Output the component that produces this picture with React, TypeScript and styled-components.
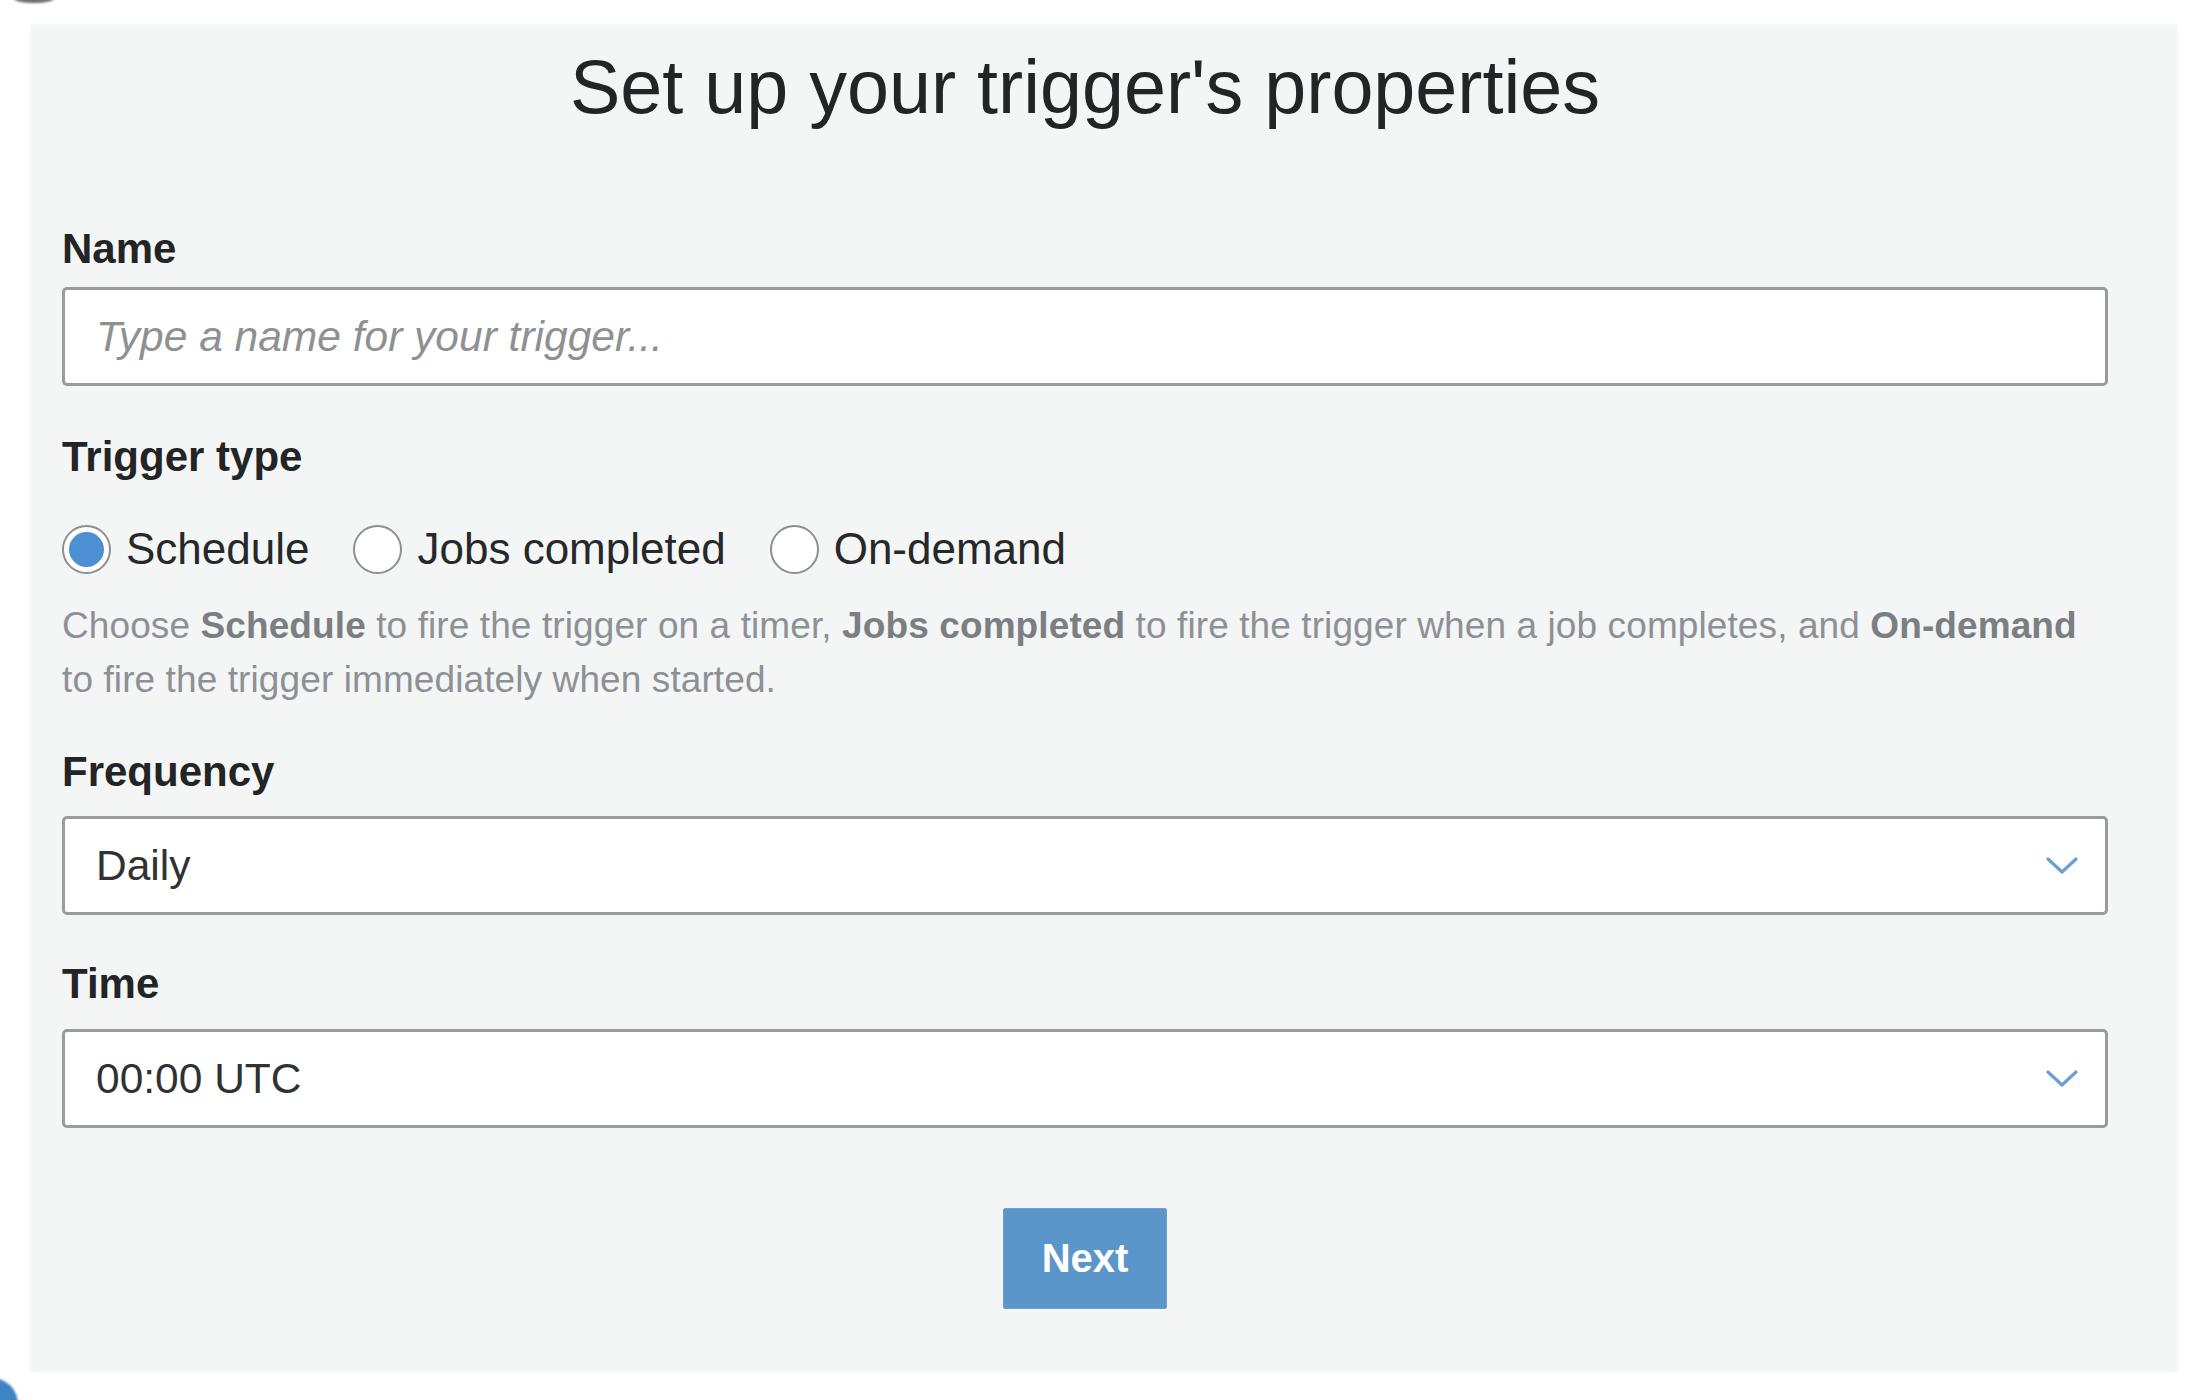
import React from "react";
import styled, { createGlobalStyle } from "styled-components";

const GlobalStyle = createGlobalStyle`
  html, body {
    margin: 0;
    padding: 0;
    background: #ffffff;
  }
  body {
    font-family: "Liberation Sans", Arial, Helvetica, sans-serif;
    color: #222;
  }
  * { box-sizing: border-box; }
`;

const Page = styled.div`
  position: relative;
  width: 2204px;
  height: 1400px;
  background: #ffffff;
  padding: 25px 27px 0 31px;
  overflow: hidden;
`;

const Corner = styled.span<{ $pos: "top" | "bottom" }>`
  position: absolute;
  left: ${(p) => (p.$pos === "top" ? "14px" : "-34px")};
  top: ${(p) => (p.$pos === "top" ? "-6px" : "1378px")};
  width: ${(p) => (p.$pos === "top" ? "40px" : "52px")};
  height: ${(p) => (p.$pos === "top" ? "9px" : "52px")};
  border-radius: 50%;
  background: ${(p) => (p.$pos === "top" ? "#6b6e72" : "#3f84c2")};
  filter: blur(1px);
`;

const Panel = styled.div`
  width: 2146px;
  height: 1346px;
  background: #f4f5f5;
  box-shadow: 0 0 3px 1px rgba(244, 245, 245, 0.8);
  padding: 15px 69px 0 31px;
  display: flex;
  flex-direction: column;
`;

const Title = styled.h1`
  margin: 0;
  font-size: 75.5px;
  line-height: 94px;
  font-weight: 400;
  color: #222426;
  text-align: center;
`;

const Field = styled.div<{ $top: number }>`
  display: flex;
  flex-direction: column;
  margin-top: ${(p) => p.$top}px;
`;

const Label = styled.label<{ $gap: number }>`
  font-size: 42px;
  line-height: 46px;
  font-weight: 700;
  color: #222426;
  margin-bottom: ${(p) => p.$gap}px;
`;

const TextBox = styled.div`
  height: 99px;
  background: #ffffff;
  border: 3px solid #999b9c;
  border-radius: 5px;
  display: flex;
  align-items: center;
  justify-content: space-between;
  padding: 0 27px 0 31px;
`;

const Placeholder = styled.span`
  font-size: 42.5px;
  font-style: italic;
  color: #8e9092;
`;

const Value = styled.span`
  font-size: 42.5px;
  color: #2f3133;
`;

const Chevron = styled.svg`
  width: 32px;
  height: 20px;
  flex: none;
`;

const RadioRow = styled.div`
  display: flex;
  align-items: center;
  gap: 44px;
  height: 50px;
  margin-top: 44px;
`;

const Option = styled.div`
  display: flex;
  align-items: center;
  gap: 15px;
`;

const RadioCircle = styled.span<{ $checked?: boolean }>`
  width: 49px;
  height: 49px;
  border-radius: 50%;
  border: 2.5px solid #8d8f91;
  background: #ffffff;
  display: flex;
  align-items: center;
  justify-content: center;
  flex: none;

  &::after {
    content: "";
    width: 35px;
    height: 35px;
    border-radius: 50%;
    background: ${(p) => (p.$checked ? "#4d8fd3" : "transparent")};
  }
`;

const OptionText = styled.span`
  font-size: 44px;
  line-height: 50px;
  color: #26282a;
`;

const Help = styled.p`
  margin: 25px 0 0 0;
  font-size: 37px;
  line-height: 54px;
  color: #8d9195;
  letter-spacing: 0.1px;

  b {
    font-weight: 700;
    color: #7b7f83;
  }
`;

const ButtonRow = styled.div`
  display: flex;
  justify-content: center;
  margin-top: 80px;
`;

const NextButton = styled.button`
  width: 164px;
  height: 101px;
  background: #5b96ca;
  border: 1px solid #6aa2d3;
  border-radius: 2px;
  color: #ffffff;
  font-family: "Liberation Sans", Arial, sans-serif;
  font-size: 40px;
  font-weight: 700;
  cursor: pointer;
  padding: 0;
`;

const ChevronIcon = () => (
  <Chevron viewBox="0 0 32 20">
    <polyline
      points="2,3 16,16 30,3"
      fill="none"
      stroke="#6b9fd2"
      strokeWidth="3.2"
      strokeLinecap="round"
      strokeLinejoin="round"
    />
  </Chevron>
);

export default function App() {
  return (
    <>
      <GlobalStyle />
      <Page>
        <Corner $pos="top" />
        <Corner $pos="bottom" />
        <Panel>
          <Title>Set up your trigger's properties</Title>

          <Field $top={92}>
            <Label $gap={15}>Name</Label>
            <TextBox>
              <Placeholder>Type a name for your trigger...</Placeholder>
            </TextBox>
          </Field>

          <Field $top={48}>
            <Label $gap={0}>Trigger type</Label>
          </Field>
          <RadioRow>
            <Option>
              <RadioCircle $checked />
              <OptionText>Schedule</OptionText>
            </Option>
            <Option>
              <RadioCircle />
              <OptionText>Jobs completed</OptionText>
            </Option>
            <Option>
              <RadioCircle />
              <OptionText>On-demand</OptionText>
            </Option>
          </RadioRow>
          <Help>
            Choose <b>Schedule</b> to fire the trigger on a timer, <b>Jobs completed</b> to fire the
            trigger when a job completes, and <b>On-demand</b>
            <br />
            to fire the trigger immediately when started.
          </Help>

          <Field $top={42}>
            <Label $gap={21}>Frequency</Label>
            <TextBox>
              <Value>Daily</Value>
              <ChevronIcon />
            </TextBox>
          </Field>

          <Field $top={46}>
            <Label $gap={22}>Time</Label>
            <TextBox>
              <Value>00:00 UTC</Value>
              <ChevronIcon />
            </TextBox>
          </Field>

          <ButtonRow>
            <NextButton>Next</NextButton>
          </ButtonRow>
        </Panel>
      </Page>
    </>
  );
}
